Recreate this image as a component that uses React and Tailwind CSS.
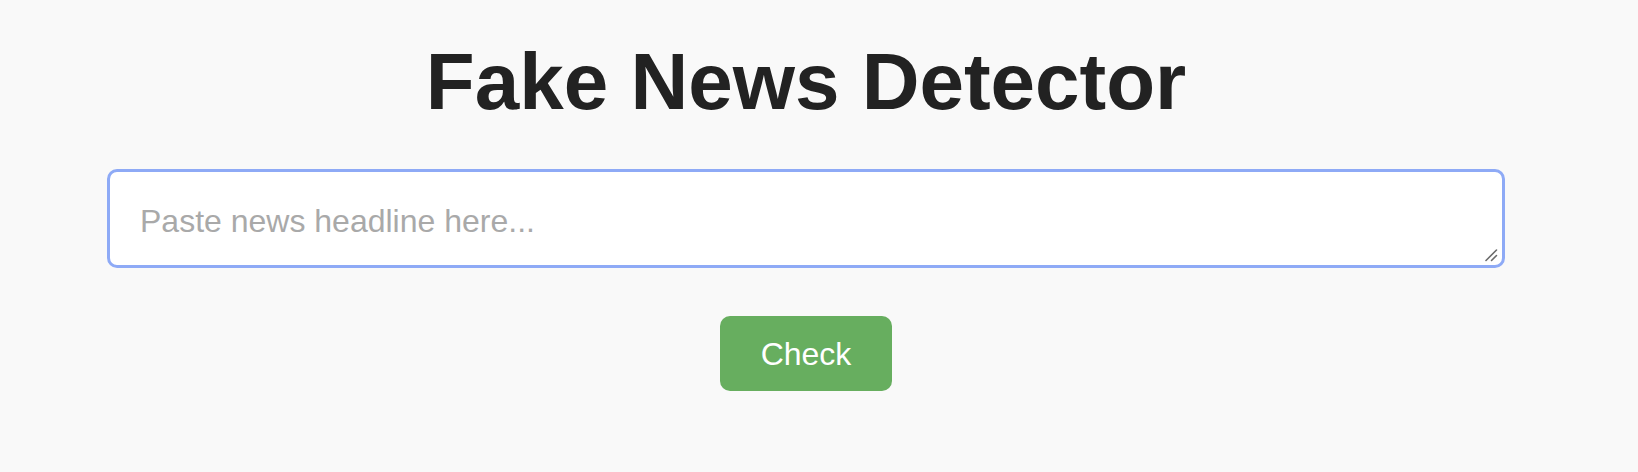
import { useState } from 'react';

export default function App() {
  const [text, setText] = useState('');

  return (
    <div className="min-h-screen bg-[#f9f9f9] flex flex-col items-center pr-[26px]" style={{ fontFamily: '"Liberation Sans", Arial, sans-serif' }}>
      {/* ── Title ── */}
      <h1 className="mt-[42px] text-[80px] leading-none font-bold text-[#222222] select-none">
        Fake News Detector
      </h1>

      {/* ── Input ── */}
      <div className="relative mt-[47px]">
        <textarea
          value={text}
          onChange={(e) => setText(e.target.value)}
          placeholder="Paste news headline here..."
          className="block w-[1398px] h-[99px] bg-white border-[3.5px] border-[#8eaaf6] rounded-[10px] pt-[30px] px-[30px] text-[32px] leading-[38px] text-[#222222] placeholder:text-[#a9a9a9] outline-none resize-none"
        />
        <svg className="absolute right-[7px] bottom-[6px] pointer-events-none" width="14" height="14" viewBox="0 0 14 14">
          <line x1="2" y1="12.5" x2="12.5" y2="2" stroke="#6b6b6b" strokeWidth="1.6" strokeLinecap="round" />
          <line x1="7.5" y1="12.5" x2="12.5" y2="7.5" stroke="#6b6b6b" strokeWidth="1.6" strokeLinecap="round" />
        </svg>
      </div>

      {/* ── Action ── */}
      <button className="mt-[48px] w-[172px] h-[75px] rounded-[10px] bg-[#67ae5f] text-white text-[32px] flex items-center justify-center">
        Check
      </button>
    </div>
  );
}
